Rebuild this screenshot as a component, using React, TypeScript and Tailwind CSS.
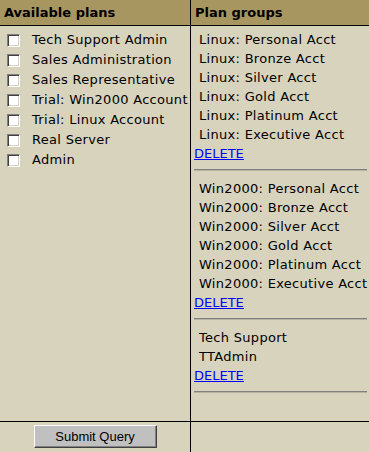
import React from "react";

const plans = [
  "Tech Support Admin",
  "Sales Administration",
  "Sales Representative",
  "Trial: Win2000 Account",
  "Trial: Linux Account",
  "Real Server",
  "Admin",
];

const groups = [
  [
    "Linux: Personal Acct",
    "Linux: Bronze Acct",
    "Linux: Silver Acct",
    "Linux: Gold Acct",
    "Linux: Platinum Acct",
    "Linux: Executive Acct",
  ],
  [
    "Win2000: Personal Acct",
    "Win2000: Bronze Acct",
    "Win2000: Silver Acct",
    "Win2000: Gold Acct",
    "Win2000: Platinum Acct",
    "Win2000: Executive Acct",
  ],
  ["Tech Support", "TTAdmin"],
];

export default function App() {
  return (
    <div className="w-[369px] h-[452px] bg-[#d8d3bd] text-black font-['DejaVu_Sans',Verdana,sans-serif] text-[13px] overflow-hidden">
      <div className="grid grid-cols-[191px_1fr] grid-rows-[26px_395px_31px] h-full">
        <div className="bg-[#a89660] border-r border-b border-black pl-[4px] font-bold leading-[25px]">
          Available plans
        </div>
        <div className="bg-[#a89660] border-b border-black pl-[4px] font-bold leading-[25px]">
          Plan groups
        </div>
        <div className="border-r border-black pt-[4px] tracking-[0.3px]">
          {plans.map((p) => (
            <div key={p} className="flex items-center h-[20px]">
              <span className="ml-[7px] w-[13px] h-[13px] bg-white border border-t-[#808080] border-l-[#808080] border-r-white border-b-white shadow-[inset_1px_1px_0_#404040,inset_-1px_-1px_0_#d4d0c8]" />
              <span className="ml-[12px] whitespace-nowrap">{p}</span>
            </div>
          ))}
        </div>
        <div className="pt-[4px] pl-[3px] pr-[3px] tracking-[0.3px]">
          {groups.map((g, i) => (
            <div key={i}>
              {g.map((item) => (
                <div key={item} className="pl-[5px] leading-[19px] whitespace-nowrap">
                  {item}
                </div>
              ))}
              <a href="#" className="block leading-[19px] text-[#0000ff] underline tracking-normal">
                DELETE
              </a>
              <div className="mt-[6px] mb-[8px] h-[2px] border-t border-t-[#808080] border-b border-b-[#b8b3a0]" />
            </div>
          ))}
        </div>
        <div className="border-r border-t border-black flex justify-center pt-[3px]">
          <button className="w-[123px] h-[23px] bg-[#c0c0c0] border border-t-white border-l-white border-r-[#404040] border-b-[#404040] shadow-[inset_-1px_-1px_0_#808080] font-['Liberation_Sans',Arial,sans-serif] text-[13px] text-black">
            Submit Query
          </button>
        </div>
        <div className="border-t border-black" />
      </div>
    </div>
  );
}
